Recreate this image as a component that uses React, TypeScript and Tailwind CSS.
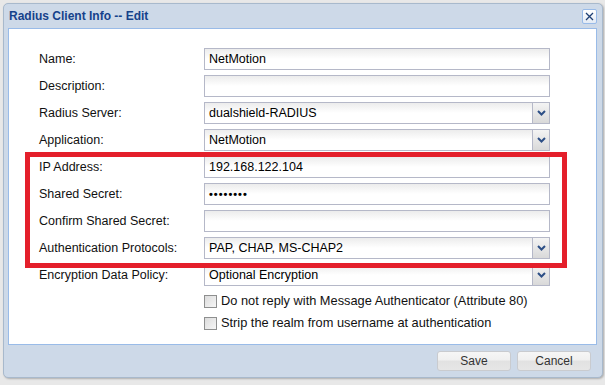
import React from 'react';

const font = { fontFamily: '"Liberation Sans", Arial, sans-serif' };

function TextField({ value, secret }: { value?: string; secret?: boolean }) {
  return (
    <div className="h-[22px] w-[346px] border border-[#b5b8c8] bg-gradient-to-b from-[#ececec] via-white to-white flex items-center px-[4px] text-[12.5px] text-black">
      {secret ? <span className="text-[11px] font-bold tracking-[1px] leading-none">••••••••</span> : value}
    </div>
  );
}

function Combo({ value }: { value: string }) {
  return (
    <div className="h-[22px] w-[346px] border border-[#b5b8c8] bg-gradient-to-b from-[#ececec] via-white to-white flex items-center text-[12.5px] text-black">
      <span className="flex-1 px-[4px]">{value}</span>
      <div className="h-full w-[17px] border-l border-[#b5b8c8] bg-gradient-to-b from-[#f4f4f4] to-[#d9d9d9] flex items-center justify-center">
        <svg width="9" height="6" viewBox="0 0 9 6">
          <path d="M1 1 L4.5 4.5 L8 1" stroke="#2d4f86" strokeWidth="2" fill="none" />
        </svg>
      </div>
    </div>
  );
}

function Row({ label, children }: { label: string; children: React.ReactNode }) {
  return (
    <div className="flex items-center h-[22px] mb-[5px]">
      <div className="w-[195px] pl-[30px] text-[12.5px] text-[#111]">{label}</div>
      {children}
    </div>
  );
}

function Check({ label }: { label: string }) {
  return (
    <div className="flex items-center h-[22px] pl-[195px]">
      <div className="w-[13px] h-[13px] border border-[#8e8f8f] bg-gradient-to-br from-[#dcdcdc] to-[#f6f6f6]" />
      <span className="ml-[4px] text-[12.8px] text-[#111]">{label}</span>
    </div>
  );
}

function Button({ children }: { children: React.ReactNode }) {
  return (
    <div className="w-[74px] h-[20px] rounded-[3px] border border-[#c9cbcf] bg-[linear-gradient(#f6f6f6_0%,#f0f0f0_45%,#e2e2e2_50%,#e6e6e6_100%)] flex items-center justify-center text-[12px] text-[#333]">
      {children}
    </div>
  );
}

export default function App() {
  return (
    <div className="w-[605px] h-[385px] bg-[#e8e8e8] pt-[3px] pl-[3px] overflow-hidden" style={font}>
      <div className="w-[600px] h-[375px] rounded-[5px] border border-[#a8b9cc] bg-[#cdd9e8] shadow-[1px_1px_2px_rgba(0,0,0,0.25)] flex flex-col px-[4px] pr-[5px]">
        <div className="h-[24px] flex items-center justify-between">
          <span className="pl-[1px] text-[12px] font-bold text-[#15428b]">Radius Client Info -- Edit</span>
          <div className="w-[15px] h-[15px] rounded-[2px] border border-[#99bbe8] bg-gradient-to-b from-white to-[#e3ebf5] flex items-center justify-center">
            <svg width="9" height="9" viewBox="0 0 9 9">
              <path d="M1 1 L8 8 M8 1 L1 8" stroke="#1f3f73" strokeWidth="1.3" />
            </svg>
          </div>
        </div>
        <div className="relative h-[317px] border border-[#99bbe8] bg-white pt-[19px]">
          <Row label="Name:"><TextField value="NetMotion" /></Row>
          <Row label="Description:"><TextField /></Row>
          <Row label="Radius Server:"><Combo value="dualshield-RADIUS" /></Row>
          <Row label="Application:"><Combo value="NetMotion" /></Row>
          <Row label="IP Address:"><TextField value="192.168.122.104" /></Row>
          <Row label="Shared Secret:"><TextField secret /></Row>
          <Row label="Confirm Shared Secret:"><TextField /></Row>
          <Row label="Authentication Protocols:"><Combo value="PAP, CHAP, MS-CHAP2" /></Row>
          <Row label="Encryption Data Policy:"><Combo value="Optional Encryption" /></Row>
          <div className="-mt-[1px]">
            <Check label="Do not reply with Message Authenticator (Attribute 80)" />
            <Check label="Strip the realm from username at authentication" />
          </div>
          <div className="absolute left-[16px] top-[123px] w-[542px] h-[116px] border-[5px] border-[#e41f2b]" />
        </div>
        <div className="flex-1 flex items-start justify-end gap-[6px] pt-[6px] pr-[6px]">
          <Button>Save</Button>
          <Button>Cancel</Button>
        </div>
      </div>
    </div>
  );
}
